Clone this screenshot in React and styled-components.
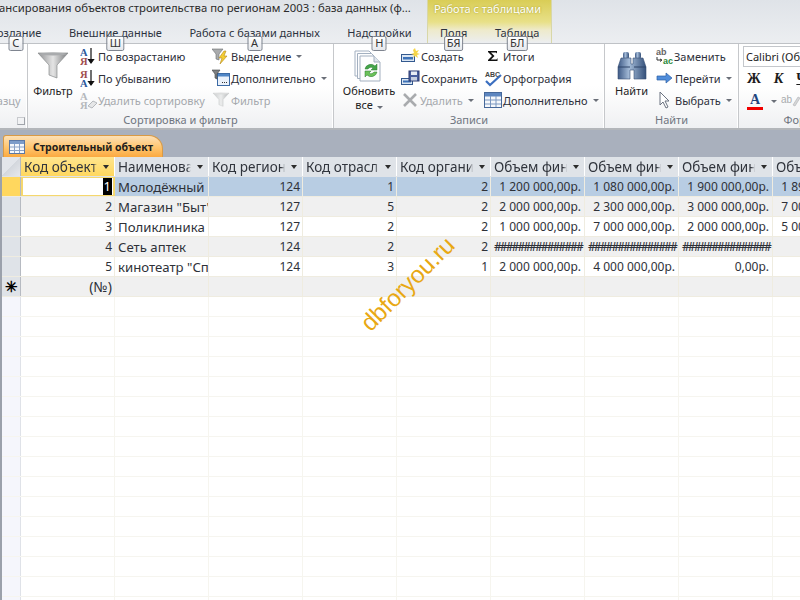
import styled, { createGlobalStyle } from "styled-components";

const Global = createGlobalStyle`
  html, body { margin: 0; padding: 0; background: #fff; }
  * { box-sizing: border-box; }
`;

const Page = styled.div`
  position: relative;
  width: 800px;
  height: 600px;
  overflow: hidden;
  font-family: "Noto Sans", "Open Sans", sans-serif;
  font-size: 11px;
  color: #222;
  background: #fff;
`;

const Header = styled.header`
  display: flex;
  height: 44px;
  background: linear-gradient(#dfe3e8, #eceef1);
  border-bottom: 1px solid #bfc2c6;
`;

const HeaderMain = styled.div`
  width: 427px;
  flex-shrink: 0;
`;

const Title = styled.div`
  height: 22px;
  margin-left: -1px;
  font-size: 11.3px;
  white-space: nowrap;
  color: #2b2b2b;
`;

const TabRow = styled.nav`
  display: flex;
  gap: 27.5px;
  height: 21px;
  padding-top: 3px;
  padding-left: ${(props) => props.$pad || 0}px;
  margin-left: ${(props) => props.$shift || 0}px;
  color: #2d3340;
`;

const Tab = styled.span`
  position: relative;
  white-space: nowrap;
`;

const KeyTip = styled.span`
  position: absolute;
  top: 11px;
  left: 50%;
  transform: translateX(-50%);
  z-index: 3;
  min-width: 15px;
  height: 15px;
  padding: 0 2px;
  line-height: 12px;
  text-align: center;
  font-size: 11px;
  color: #333;
  background: linear-gradient(#fff, #e6e8ec);
  border: 1px solid #7f8590;
  border-radius: 2px;
`;

const ContextTabs = styled.div`
  width: 125px;
  flex-shrink: 0;
  background: linear-gradient(#d9cd56 0, #e8e088 22px, #eeeacb 30px, #eceef1 100%);
  border-left: 1px solid #d8d7a8;
  border-right: 1px solid #d8d7a8;
`;

const ContextLabel = styled.div`
  height: 22px;
  padding: 1px 0 0 6px;
  color: #fff;
  white-space: nowrap;
  text-shadow: 0 0 2px #9c9420;
`;

const Ribbon = styled.section`
  display: flex;
  height: 86px;
  background: linear-gradient(#fff 0, #fff 50%, #eff0f2 100%);
  border-bottom: 2px solid #b3b6ba;
`;

const Group = styled.div`
  width: ${(props) => props.$w}px;
  flex-shrink: 0;
  display: flex;
  flex-direction: column;
  position: relative;
  border-right: 1px solid #c6c8cb;
  box-shadow: inset -1px 0 0 #fff;
`;

const GroupBody = styled.div`
  display: flex;
  flex: 1;
  min-height: 0;
  padding-left: ${(props) => props.$pad || 0}px;
`;

const GroupLabel = styled.div`
  height: 16px;
  text-align: center;
  white-space: nowrap;
  color: #6f7580;
`;

const Launcher = styled.span`
  position: absolute;
  right: 2px;
  bottom: 3px;
  width: 8px;
  height: 8px;
  border: 1px solid #a0a4aa;
  border-top-color: #c8cace;
  border-left-color: #c8cace;
`;

const BigButton = styled.div`
  width: ${(props) => props.$w}px;
  margin-right: ${(props) => props.$after || 0}px;
  flex-shrink: 0;
  display: flex;
  flex-direction: column;
  align-items: center;
  padding-top: 5px;
  line-height: 14px;
  text-align: center;
  white-space: nowrap;
  svg { display: block; margin-bottom: 1px; }
`;

const Column = styled.div`
  width: ${(props) => props.$w}px;
  flex-shrink: 0;
  padding-top: 1px;
`;

const Item = styled.div`
  display: flex;
  align-items: center;
  height: 22px;
  gap: ${(props) => props.$gap ?? 1}px;
  white-space: nowrap;
  color: ${(props) => (props.$off ? "#a5a8ad" : "#2d2f3a")};
  svg { flex-shrink: 0; }
`;

const CutLabel = styled.span`
  margin-left: -23px;
`;

const Caret = styled.span`
  display: inline-block;
  width: 0;
  height: 0;
  margin: 1px 0 0 4px;
  border-left: 3px solid transparent;
  border-right: 3px solid transparent;
  border-top: 3px solid ${(props) => props.$color || "#6a6f78"};
`;

const FontBox = styled.div`
  width: 80px;
  height: 21px;
  margin: 2px 0 1px 4px;
  padding: 2px 0 0 2px;
  background: #fff;
  border: 1px solid #c4c7cb;
  white-space: nowrap;
  overflow: hidden;
`;

const FontRow = styled.div`
  display: flex;
  align-items: center;
  gap: ${(props) => props.$gap}px;
  height: 22px;
  padding-left: 8px;
`;

const FontGlyph = styled.span`
  font-family: "Liberation Serif", serif;
  font-weight: 700;
  font-size: 14px;
  font-style: ${(props) => (props.$italic ? "italic" : "normal")};
  text-decoration: ${(props) => (props.$under ? "underline" : "none")};
  color: #1c1c1c;
`;

const ColorA = styled.span`
  width: 16px;
  text-align: center;
  font-family: "Liberation Serif", serif;
  font-weight: 700;
  font-size: 14px;
  line-height: 14px;
  color: #23457e;
  border-bottom: 3px solid #f00000;
`;

const DocBand = styled.div`
  height: 27px;
  background: #a9b0bd;
  padding: 5px 0 0 3px;
`;

const DocTab = styled.div`
  display: flex;
  align-items: center;
  gap: 8px;
  width: 160px;
  height: 22px;
  padding-left: 5px;
  font-weight: 700;
  font-size: 10.5px;
  color: #1d1d1d;
  background: linear-gradient(#fde0b6, #ffc56e 55%, #fba940);
  border-radius: 3px 14px 0 0;
  border: 1px solid #d99a45;
  border-bottom: none;
`;

const Sheet = styled.div`
  display: flex;
  flex-direction: column;
  border-left: 2px solid #9ba1ab;
`;

const Row = styled.div`
  display: grid;
  grid-template-columns: 19px repeat(9, 94px);
  height: 20px;
  background: ${(props) => props.$bg || "#fff"};
  border-bottom: 1px solid ${(props) => props.$line || "#efece0"};
`;

const Corner = styled.div`
  background: linear-gradient(135deg, #e2e5ea 50%, #d3d7dd 50%, #e6e8ec);
  border-right: 1px solid #b6bac1;
`;

const HeadCell = styled.div`
  display: flex;
  align-items: center;
  padding-left: 3px;
  background: ${(props) => (props.$active ? "linear-gradient(#ffe58f, #ffd75e)" : "#dfe3e8")};
  border-right: 1px solid #fff;
  font-size: 13.5px;
  color: #30343c;
`;

const HeadText = styled.span`
  flex: 1;
  min-width: 0;
  overflow: hidden;
  white-space: nowrap;
  mask-image: linear-gradient(to left, transparent 0, #000 4px);
`;

const HeadArrow = styled.span`
  width: 0;
  height: 0;
  margin: 1px 5px 0 6px;
  border-left: 3.5px solid transparent;
  border-right: 3.5px solid transparent;
  border-top: 4px solid #2c2c2c;
`;

const Selector = styled.div`
  display: flex;
  align-items: center;
  justify-content: center;
  font-size: 15px;
  font-weight: 700;
  line-height: 1;
  color: #000;
  background: ${(props) => props.$bg};
  border-right: 1px solid ${(props) => props.$edge || "#b6bac1"};
`;

const Cell = styled.div`
  padding: 0 ${(props) => (props.$money ? 3 : 2)}px 0 3px;
  line-height: 20px;
  font-size: ${(props) => (props.$num ? 12 : 13.2)}px;
  color: #2e3138;
  text-align: ${(props) => (props.$num ? "right" : "left")};
  white-space: nowrap;
  overflow: hidden;
  border-right: 1px solid ${(props) => props.$line || "#efece0"};
`;

const NewRecordMark = styled.span`
  font-size: 14px;
`;

const Hashes = styled.span`
  letter-spacing: -1.9px;
  font-size: 12px;
  font-weight: 500;
`;

const ActiveCell = styled.div`
  padding-right: 1px;
  line-height: 17px;
  font-size: 13px;
  text-align: right;
  background: #fff;
  border: 2px solid #f5d76e;
  border-top-width: 1px;
  border-bottom-width: 1px;
`;

const SelectedDigit = styled.span`
  display: inline-block;
  padding: 0 1px;
  color: #fff;
  background: #000;
`;

const Watermark = styled.div`
  position: absolute;
  left: 347px;
  top: 270px;
  transform: rotate(-45deg);
  font-family: "Liberation Sans", sans-serif;
  font-size: 24px;
  color: #e8a813;
  white-space: nowrap;
  pointer-events: none;
`;

const Funnel = ({ size = 34, off }) => (
  <svg width={size} height={size} viewBox="0 0 34 34">
    <defs>
      <linearGradient id={off ? "fo" : "fn"} x1="0" x2="1">
        <stop offset="0" stopColor={off ? "#c8cacc" : "#8f9092"} />
        <stop offset="0.5" stopColor={off ? "#eceded" : "#e4e4e4"} />
        <stop offset="1" stopColor={off ? "#b4b6b8" : "#77797b"} />
      </linearGradient>
    </defs>
    <path d="M2 4h30L21 16v13l-8-3V16z" fill={`url(#${off ? "fo" : "fn"})`} stroke={off ? "#c0c2c4" : "#8a8c8e"} strokeWidth="0.7" />
    <ellipse cx="17" cy="5" rx="14" ry="1.5" fill={off ? "#dcdddd" : "#a9abad"} />
  </svg>
);

const SortIcon = ({ down, off }) => {
  const top = off ? "#b5b8bc" : down ? "#a04c4c" : "#2c5a9c";
  const bottom = off ? "#b5b8bc" : down ? "#2c5a9c" : "#a04c4c";
  const letterStyle = { fontFamily: "Liberation Serif", fontWeight: 700, fontSize: 10.5 };
  return (
    <svg width="17" height="19" viewBox="0 0 17 19">
      <text x="0" y="8.5" fill={top} style={letterStyle}>{down ? "Я" : "А"}</text>
      <text x="0" y="18" fill={bottom} style={letterStyle}>{down ? "А" : "Я"}</text>
      {off ? (
        <path d="M8 15l5-5 4 2-5 5z" fill="#e6e7e8" stroke="#b5b8bc" />
      ) : (
        <path d="M11 1v14M8.5 12.5L11 16l2.5-3.5z" stroke="#111" strokeWidth="1.2" fill="#111" />
      )}
    </svg>
  );
};

const SelectionIcon = () => (
  <svg width="18" height="18" viewBox="0 0 18 18">
    <path d="M0 2h11L7 7v6L4 12V7z" fill="#a9abad" stroke="#6c6e70" strokeWidth="0.6" />
    <path d="M12 4L7 11h3l-2 6 7-8h-3l2-5z" fill="#f3cc33" stroke="#b58a1c" strokeWidth="0.6" />
  </svg>
);

const AdvancedIcon = () => (
  <svg width="18" height="18" viewBox="0 0 18 18">
    <rect x="5.5" y="4.5" width="12" height="12" fill="#eaf1fa" stroke="#3b6aa5" />
    <rect x="6" y="5" width="11" height="2.5" fill="#4f86c6" />
    <path d="M10 13.5h1M12 13.5h1M14 13.5h1" stroke="#333" />
    <path d="M0 1h8L5 5v5L3 9V5z" fill="#7e8082" stroke="#3e3f40" strokeWidth="0.6" />
  </svg>
);

const RefreshIcon = () => (
  <svg width="34" height="34" viewBox="0 0 34 34">
    {[0, 2.5, 5].map((o) => (
      <path key={o} d={`M${o + 3} ${o + 2}h14l6 6v19h-20z`} fill="#fdfdfe" stroke="#a3b0c0" />
    ))}
    <path d="M22 7v6h6" fill="#dfe5ec" stroke="#a3b0c0" />
    <path d="M13 20a6 6 0 0 1 10-3l2-2v6h-6l2-2a3.5 3.5 0 0 0-5 1z" fill="#45a54a" stroke="#2d7a33" strokeWidth="0.5" />
    <path d="M25 23a6 6 0 0 1-10 3l-2 2v-6h6l-2 2a3.5 3.5 0 0 0 5-1z" fill="#6cc25a" stroke="#2d7a33" strokeWidth="0.5" />
  </svg>
);

const CreateIcon = () => (
  <svg width="19" height="16" viewBox="0 0 19 16">
    <rect x="0.5" y="6.5" width="13" height="7" fill="#dbe6f3" stroke="#33598f" />
    <rect x="2" y="9" width="10" height="2.5" fill="#3d72b8" />
    <path d="M14 0l1 3 3-1-2 3 3 1-3 1 1 3-3-2-2 2 1-3-3-1 3-1-1-3z" fill="#f6d64a" />
  </svg>
);

const SaveIcon = () => (
  <svg width="19" height="16" viewBox="0 0 19 16">
    <rect x="0.5" y="8.5" width="11" height="6" fill="#dbe6f3" stroke="#33598f" />
    <rect x="2" y="10.5" width="8" height="2" fill="#3d72b8" />
    <rect x="8" y="1" width="10" height="10" fill="#4a5f9e" stroke="#2c3b70" />
    <rect x="10" y="1.5" width="6" height="3.5" fill="#e8edf5" />
    <rect x="10" y="7" width="6" height="3.5" fill="#c6cfe0" />
  </svg>
);

const DeleteIcon = () => (
  <svg width="18" height="16" viewBox="0 0 18 16">
    <path d="M3 2l12 12M15 2L3 14" stroke="#a9abae" strokeWidth="2.6" />
  </svg>
);

const SigmaIcon = () => (
  <svg width="17" height="16" viewBox="0 0 17 16">
    <path d="M4 3h9v2.5L12 4.5H7l3.5 3.5L7 11.5h5.5l1-1.5V13H4v-1l4-4-4-4z" fill="#111" />
  </svg>
);

const SpellIcon = () => (
  <svg width="19" height="17" viewBox="0 0 19 17">
    <text x="1" y="7" fontSize="7" fontWeight="700" fontFamily="Liberation Sans" fill="#444">ABC</text>
    <path d="M2 11l4 4 11-10" fill="none" stroke="#3b6fc0" strokeWidth="2.2" />
  </svg>
);

const GridIcon = () => (
  <svg width="18" height="16" viewBox="0 0 18 16">
    <rect x="0.5" y="0.5" width="17" height="15" fill="#f6f8fb" stroke="#46689a" />
    <rect x="1" y="1" width="16" height="3.5" fill="#5d86c0" />
    <path d="M1 8h16M1 12h16M6.5 4v11M12 4v11" stroke="#7b97c0" />
  </svg>
);

const BinocularsIcon = () => (
  <svg width="30" height="34" viewBox="0 0 30 34">
    <defs>
      <linearGradient id="bin" x1="0" x2="1">
        <stop offset="0" stopColor="#3e5a86" />
        <stop offset="0.4" stopColor="#a5bcd8" />
        <stop offset="1" stopColor="#34507a" />
      </linearGradient>
    </defs>
    <rect x="6" y="3" width="6" height="7" rx="2" fill="url(#bin)" />
    <rect x="18" y="3" width="6" height="7" rx="2" fill="url(#bin)" />
    <path d="M4 9h10v6h2V9h10l3 9v12H17V21h-4v9H1V18z" fill="url(#bin)" stroke="#3b5277" strokeWidth="0.6" />
    <path d="M1 18h12M17 18h12" stroke="#2f4468" />
  </svg>
);

const ReplaceIcon = () => (
  <svg width="18" height="18" viewBox="0 0 18 18">
    <text x="0" y="8" fontSize="9" fontWeight="700" fontFamily="Liberation Sans" fill="#666">ab</text>
    <text x="7" y="17" fontSize="9" fontWeight="700" fontFamily="Liberation Sans" fill="#2c8a3a">ac</text>
    <path d="M1 10v3h4M4 12l2 1-2 1.5" fill="none" stroke="#333" />
  </svg>
);

const GotoIcon = () => (
  <svg width="18" height="14" viewBox="0 0 18 14">
    <path d="M1 5h9V2l6 5-6 5V9H1z" fill="#4f8ddb" stroke="#2d5fa3" strokeWidth="0.7" />
  </svg>
);

const PointerIcon = () => (
  <svg width="18" height="18" viewBox="0 0 18 18">
    <path d="M4 1v13l3-3 3 6 2-1-3-6h4z" fill="#fff" stroke="#6b7280" />
  </svg>
);

const HighlightIcon = () => (
  <svg width="20" height="16" viewBox="0 0 20 16">
    <text x="0" y="10" fontSize="10" fontFamily="Liberation Sans" fill="#a9abae">ab</text>
    <path d="M12 12l5-8 2 1-5 8z" fill="#d5d6d8" stroke="#b0b2b5" strokeWidth="0.6" />
  </svg>
);

const TableIcon = () => (
  <svg width="16" height="14" viewBox="0 0 16 14">
    <rect x="0.5" y="0.5" width="15" height="13" fill="#f6f8fb" stroke="#5c78a5" />
    <rect x="1" y="1" width="14" height="3" fill="#7d9cc9" />
    <path d="M1 7h14M1 10.5h14M5.5 4v9M10.5 4v9" stroke="#8aa2c6" />
  </svg>
);

const columns = [
  "Код объекта",
  "Наименование",
  "Код региона",
  "Код отрасли",
  "Код организации",
  "Объем финансир",
  "Объем финансир",
  "Объем финансир",
  "Объем финансир",
];

const rows = [
  [1, "Молодёжный", 124, 1, 2, "1 200 000,00р.", "1 080 000,00р.", "1 900 000,00р.", "1 890 000,00р."],
  [2, 'Магазин "Быт"', 127, 5, 2, "2 000 000,00р.", "2 300 000,00р.", "3 000 000,00р.", "7 000 000,00р."],
  [3, "Поликлиника", 127, 2, 2, "1 000 000,00р.", "7 000 000,00р.", "2 000 000,00р.", "5 000 000,00р."],
  [4, "Сеть аптек", 124, 2, 2, "#", "#", "#", ""],
  [5, 'кинотеатр "Спутник"', 124, 3, 1, "2 000 000,00р.", "4 000 000,00р.", "0,00р.", ""],
];

const rowBg = (i) => (i === 0 ? "#b8cde3" : i % 2 ? "#f0f0f0" : "#fff");

export default function App() {
  return (
    <Page>
      <Global />
      <Header>
        <HeaderMain>
          <Title>ансирования объектов строительства по регионам 2003 : база данных (ф...</Title>
          <TabRow $shift={-10}>
            <Tab>Создание<KeyTip>С</KeyTip></Tab>
            <Tab>Внешние данные<KeyTip>Ш</KeyTip></Tab>
            <Tab>Работа с базами данных<KeyTip>А</KeyTip></Tab>
            <Tab>Надстройки<KeyTip>Н</KeyTip></Tab>
          </TabRow>
        </HeaderMain>
        <ContextTabs>
          <ContextLabel>Работа с таблицами</ContextLabel>
          <TabRow $pad={12}>
            <Tab>Поля<KeyTip>БЯ</KeyTip></Tab>
            <Tab>Таблица<KeyTip>БЛ</KeyTip></Tab>
          </TabRow>
        </ContextTabs>
      </Header>

      <Ribbon>
        <Group $w={28}>
          <GroupBody>
            <Column $w={27}>
              <Item />
              <Item />
              <Item $off><CutLabel>образцу</CutLabel></Item>
            </Column>
          </GroupBody>
          <GroupLabel />
          <Launcher />
        </Group>

        <Group $w={306}>
          <GroupBody $pad={3}>
            <BigButton $w={44} $after={5}>
              <Funnel />
              Фильтр
            </BigButton>
            <Column $w={132}>
              <Item><SortIcon />По возрастанию</Item>
              <Item><SortIcon down />По убыванию</Item>
              <Item $off><SortIcon off />Удалить сортировку</Item>
            </Column>
            <Column $w={120}>
              <Item><SelectionIcon />Выделение<Caret /></Item>
              <Item><AdvancedIcon />Дополнительно<Caret /></Item>
              <Item $off><Funnel size={18} off />Фильтр</Item>
            </Column>
          </GroupBody>
          <GroupLabel>Сортировка и фильтр</GroupLabel>
        </Group>

        <Group $w={271}>
          <GroupBody $pad={3}>
            <BigButton $w={64}>
              <RefreshIcon />
              <div>Обновить</div>
              <div>все<Caret /></div>
            </BigButton>
            <Column $w={83}>
              <Item $gap={1}><CreateIcon />Создать</Item>
              <Item $gap={1}><SaveIcon />Сохранить</Item>
              <Item $off $gap={1}><DeleteIcon />Удалить<Caret /></Item>
            </Column>
            <Column $w={118}>
              <Item $gap={2}><SigmaIcon />Итоги</Item>
              <Item $gap={0}><SpellIcon />Орфография</Item>
              <Item $gap={1}><GridIcon />Дополнительно<Caret /></Item>
            </Column>
          </GroupBody>
          <GroupLabel>Записи</GroupLabel>
        </Group>

        <Group $w={134}>
          <GroupBody $pad={4}>
            <BigButton $w={45} $after={2}>
              <BinocularsIcon />
              Найти
            </BigButton>
            <Column $w={80}>
              <Item $gap={0}><ReplaceIcon />Заменить</Item>
              <Item $gap={1}><GotoIcon />Перейти<Caret /></Item>
              <Item $gap={1}><PointerIcon />Выбрать<Caret /></Item>
            </Column>
          </GroupBody>
          <GroupLabel>Найти</GroupLabel>
        </Group>

        <Group $w={220}>
          <FontBox>Calibri (Область</FontBox>
          <FontRow $gap={13}>
            <FontGlyph>Ж</FontGlyph>
            <FontGlyph $italic>К</FontGlyph>
            <FontGlyph $under>Ч</FontGlyph>
          </FontRow>
          <FontRow $gap={4}>
            <ColorA>А</ColorA>
            <Caret />
            <HighlightIcon />
          </FontRow>
          <GroupLabel>Форматирование текста</GroupLabel>
        </Group>
      </Ribbon>

      <DocBand>
        <DocTab><TableIcon />Строительный объект</DocTab>
      </DocBand>

      <Sheet>
        <Row $line="#dfe3e8">
          <Corner />
          {columns.map((name, i) => (
            <HeadCell key={i} $active={i === 0}>
              <HeadText>{name}</HeadText>
              <HeadArrow />
            </HeadCell>
          ))}
        </Row>

        {rows.map((row, i) => (
          <Row key={row[0]} $bg={rowBg(i)}>
            <Selector $bg={i === 0 ? "#ffd75e" : "#dfe3e8"} />
            {i === 0 ? (
              <ActiveCell><SelectedDigit>1</SelectedDigit></ActiveCell>
            ) : (
              <Cell $num>{row[0]}</Cell>
            )}
            <Cell>{row[1]}</Cell>
            <Cell $num>{row[2]}</Cell>
            <Cell $num>{row[3]}</Cell>
            <Cell $num>{row[4]}</Cell>
            {row.slice(5).map((value, k) => (
              <Cell key={k} $num $money>
                {value === "#" ? <Hashes>###############</Hashes> : value}
              </Cell>
            ))}
          </Row>
        ))}

        <Row $bg="#f0f0f0">
          <Selector $bg="#dfe3e8">✳</Selector>
          <Cell $num><NewRecordMark>(№)</NewRecordMark></Cell>
          {columns.slice(1).map((_, i) => <Cell key={i} />)}
        </Row>

        {Array.from({ length: 16 }).map((_, i) => (
          <Row key={i} $line="#f6f5ef">
            <Selector $bg="#f5f6fc" $edge="#dfe2e8" />
            {columns.map((_, k) => <Cell key={k} $line="#f6f5ef" />)}
          </Row>
        ))}
      </Sheet>

      <Watermark>dbforyou.ru</Watermark>
    </Page>
  );
}
